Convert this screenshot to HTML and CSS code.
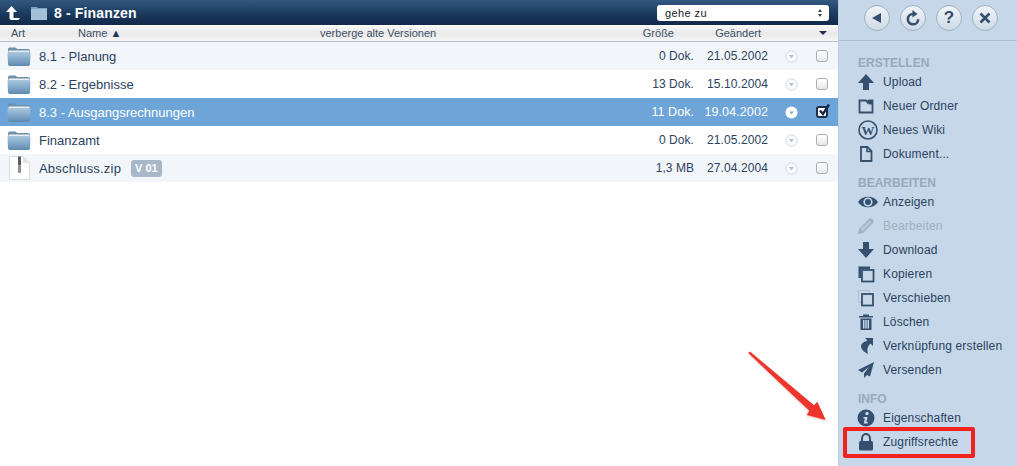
FILE: index.html
```html
<!DOCTYPE html>
<html lang="de">
<head>
<meta charset="utf-8">
<title>8 - Finanzen</title>
<link rel="stylesheet" href="styles.css">
</head>
<body>
<svg class="defs" width="0" height="0" aria-hidden="true">
  <defs>
    <linearGradient id="fg" x1="0" y1="0" x2="0" y2="1"><stop offset="0" stop-color="#a9c6de"/><stop offset=".55" stop-color="#7fa7c8"/><stop offset="1" stop-color="#5f89ad"/></linearGradient>
    <symbol id="folder" viewBox="0 0 24 22">
      <path d="M1 4.5 C1 3 2 2.500 3 2.500 H8 C9 2.500 9.500 3.500 10 4 H21 C22.500 4 23 5 23 6 V10 H1Z" fill="#6f8fa8"/>
      <path d="M1.500 5.500 H22.500 V8 H1.500Z" fill="#e8eef3"/>
      <path d="M.5 8.500 C.5 7.500 1 7 2 7 H22 C23 7 23.500 7.500 23.500 8.500 L23 19 C23 20.500 22 21 21 21 H3 C2 21 1 20.500 1 19Z" fill="url(#fg)"/>
    </symbol>
    <symbol id="menu" viewBox="0 0 14 14">
      <circle cx="7" cy="7" r="6" fill="#fbfcfd" stroke="#ccd3da"/>
      <path d="M4.200 5.500 H9.800 L7 9Z" fill="#b4bcc5"/>
    </symbol>
  </defs>
</svg>
<div class="page">
  <main class="content">
    <header class="titlebar">
      <svg class="up" viewBox="0 0 16 16" width="16" height="16"><path d="M6.500 1 L1 7 H4.500 V13 C4.500 14.500 5.500 15 7 15 H13.500 L15 13 H9 C8.500 13 8.500 12.800 8.500 12 V7 H12Z" fill="#fff"/></svg>
      <svg class="tfolder" viewBox="0 0 16 14" width="16" height="14"><path d="M0 1 H6 L7 2 H16 V14 H0Z" fill="#7fa3c2"/><path d="M0 3 H16 V14 H0Z" fill="#a4c0d8"/></svg>
      <h1 class="ttl">8 - Finanzen</h1>
      <div class="goto"><span>gehe zu</span><span class="spin"><i class="u"></i><i class="d"></i></span></div>
    </header>
    <div class="cols">
      <span class="c-art">Art</span>
      <span class="c-name">Name <b class="sort">▲</b></span>
      <span class="c-ver">verberge alte Versionen</span>
      <span class="c-size">Größe</span>
      <span class="c-date">Geändert</span>
      <span class="c-all"><i class="tri"></i></span>
    </div>
    <div class="rows">
      <div class="row odd"><svg class="ico"><use href="#folder"/></svg><span class="nm">8.1 - Planung</span><span class="sz">0 Dok.</span><span class="dt">21.05.2002</span><svg class="mn"><use href="#menu"/></svg><span class="cb"></span></div>
      <div class="row"><svg class="ico"><use href="#folder"/></svg><span class="nm">8.2 - Ergebnisse</span><span class="sz">13 Dok.</span><span class="dt">15.10.2004</span><svg class="mn"><use href="#menu"/></svg><span class="cb"></span></div>
      <div class="row sel"><svg class="ico"><use href="#folder"/></svg><span class="nm">8.3 - Ausgangsrechnungen</span><span class="sz">11 Dok.</span><span class="dt">19.04.2002</span><svg class="mn" viewBox="0 0 14 14"><circle cx="7" cy="7" r="6.500" fill="#fff"/><path d="M4.500 5.800 H9.500 L7 8.800Z" fill="#8aa6c0"/></svg><span class="cb on"><svg viewBox="0 0 14 14" width="14" height="14"><path d="M3 6.500 L6 10 L12 0.500" fill="none" stroke="#16284a" stroke-width="2.400"/></svg></span></div>
      <div class="row"><svg class="ico"><use href="#folder"/></svg><span class="nm">Finanzamt</span><span class="sz">0 Dok.</span><span class="dt">21.05.2002</span><svg class="mn"><use href="#menu"/></svg><span class="cb"></span></div>
      <div class="row odd"><svg class="ico zip" viewBox="0 0 24 26"><path d="M2.500 1.500 H16 L22.500 8 V24.500 H2.500Z" fill="#fff" stroke="#dcdcdc"/><path d="M16 1.500 V8 H22.500Z" fill="#e4e4e4"/><path d="M11 1.500 H14 V10 H11Z" fill="#5c5c5c"/><rect x="11" y="10" width="3" height="8" rx="1" fill="#8e8e8e"/></svg><span class="nm zn">Abschluss.zip</span><span class="badge">V 01</span><span class="sz">1,3 MB</span><span class="dt">27.04.2004</span><svg class="mn"><use href="#menu"/></svg><span class="cb"></span></div>
    </div>
  </main>
  <aside class="side">
    <div class="tools">
      <span class="rb"><svg viewBox="0 0 14 14" width="14" height="14"><path d="M11 2 V12 L2 7Z" fill="#34506e"/></svg></span>
      <span class="rb"><svg viewBox="0 0 14 14" width="16" height="16"><path d="M11.500 8 A4.500 4.500 0 1 1 7 3.500" fill="none" stroke="#34506e" stroke-width="2.200"/><path d="M6.500 0 L11 3.500 L6.500 6.500Z" fill="#34506e"/></svg></span>
      <span class="rb q">?</span>
      <span class="rb"><svg viewBox="0 0 14 14" width="14" height="14"><path d="M2.500 2.500 L11.500 11.500 M11.500 2.500 L2.500 11.500" stroke="#34506e" stroke-width="2.600"/></svg></span>
    </div>
    <nav class="menu">
      <h2>ERSTELLEN</h2>
      <a class="it"><svg viewBox="0 0 18 18"><path d="M9 1 L17 10 H12 V17 H6 V10 H1Z"/></svg>Upload</a>
      <a class="it"><svg viewBox="0 0 18 18"><path d="M2.500 3.500 H9 L11 6 L12 3.500 H15.500 V15.500 H2.500Z" fill="none" stroke="#34506e" stroke-width="1.800"/><path d="M10 3 H16 V7.500 H12.500Z"/></svg>Neuer Ordner</a>
      <a class="it"><svg class="wide" viewBox="0 0 20 20"><circle cx="10" cy="10" r="9" fill="none" stroke="#34506e" stroke-width="1.600"/><text x="10" y="14.500" text-anchor="middle" class="wp">W</text></svg>Neues Wiki</a>
      <a class="it"><svg viewBox="0 0 18 18"><path d="M4 2 H10.500 L14.500 6 V16 H4Z" fill="none" stroke="#34506e" stroke-width="1.800"/><path d="M10 2 V6.500 H14.500" fill="none" stroke="#34506e" stroke-width="1.500"/></svg>Dokument...</a>
      <h2 class="gap">BEARBEITEN</h2>
      <a class="it"><svg class="wide" viewBox="0 0 20 20"><path d="M0 10 C4 3 16 3 20 10 C16 17 4 17 0 10Z"/><circle cx="10" cy="10" r="4.600" fill="#c5d7e8"/><circle cx="10" cy="10" r="3"/></svg>Anzeigen</a>
      <a class="it off"><svg viewBox="0 0 18 18"><path d="M2 12 L12 2 C13 1 14 1 15 2 L16 3 C17 4 17 5 16 6 L6 16 L1 17Z" fill="#a2b1c1"/><path d="M3.500 12 L12.500 3.500 L14.500 5.500 L5.500 14.500Z" fill="#b5c6d7"/></svg>Bearbeiten</a>
      <a class="it"><svg viewBox="0 0 18 18"><path d="M6 1 H12 V8 H17 L9 17 L1 8 H6Z"/></svg>Download</a>
      <a class="it"><svg viewBox="0 0 18 18"><path d="M1.500 1.500 H13 V4 H4 V13 H1.500Z"/><rect x="5" y="5" width="11.500" height="11.500" fill="none" stroke="#34506e" stroke-width="1.800"/></svg>Kopieren</a>
      <a class="it"><svg viewBox="0 0 18 18"><rect x="1.500" y="1.500" width="11" height="12" fill="none" stroke="#8a9db0" stroke-width=".8" stroke-dasharray="1 1"/><rect x="5" y="5" width="11" height="11.500" fill="#c5d7e8" stroke="#34506e" stroke-width="1.800"/></svg>Verschieben</a>
      <a class="it"><svg viewBox="0 0 18 18"><path d="M6 3 V1.500 H12 V3 H16 V4.500 H2 V3Z"/><path d="M3.500 5.500 H14.500 V17 H3.500Z M6 7 V15.500 H7.500 V7Z M8.300 7 V15.500 H9.700 V7Z M10.500 7 V15.500 H12 V7Z" fill-rule="evenodd"/></svg>Löschen</a>
      <a class="it"><svg viewBox="0 0 18 18"><path d="M8 1 H16 V9 L13.500 6.500 C10 10 10 13 11 17 C7 15 4 12 4 9 C4 7 6 5 10.500 3.500Z"/></svg>Verknüpfung erstellen</a>
      <a class="it"><svg viewBox="0 0 18 18"><path d="M17 1 L1 9 L5 11.500 L12 6 L7 12.500 V17 L10 14 L13 15.500Z"/></svg>Versenden</a>
      <h2 class="gap2">INFO</h2>
      <a class="it"><svg viewBox="0 0 18 18"><circle cx="9" cy="9" r="8.500"/><circle cx="10" cy="4.500" r="1.700" fill="#c5d7e8"/><path d="M6.500 8 H10.500 L9.500 13 H11 L10.500 14.500 H6.800 L7.800 9.500 H6.300Z" fill="#c5d7e8"/></svg>Eigenschaften</a>
      <a class="it"><svg viewBox="0 0 18 18"><path d="M5 8 V5.500 C5 -.5 13 -.5 13 5.500 V8" fill="none" stroke="#34506e" stroke-width="2"/><rect x="2" y="8" width="14" height="9.500" rx="1.500"/></svg>Zugriffsrechte</a>
    </nav>
  </aside>
</div>
<svg class="arrow" viewBox="0 0 90 80" width="90" height="80" aria-hidden="true"><path d="M3.300 5 L5 3.500 L69 57.300 L72.300 53.700 L80.700 72 L61.700 67 L64.300 62.700 Z" fill="#ee342b"/></svg>
<div class="mark"></div>
</body>
</html>
```
FILE: styles.css
```css
* { box-sizing: border-box; }
html, body { margin: 0; height: 466px; overflow: hidden; background: #fff; }
body { font-family: "Liberation Sans", Arial, sans-serif; position: relative; color: #2c4260; -webkit-font-smoothing: antialiased; }
.defs { position: absolute; }
.page { display: flex; height: 466px; }
.content { width: 838px; flex: none; }
.side { width: 179px; flex: none; background: #c5d7e8; border-left: 1px solid #bcd0e2; }

.titlebar { height: 25px; display: flex; align-items: center; padding-left: 5px; background: linear-gradient(#33587f, #1b3a5e 55%, #12294a); }
.up { margin-right: 10px; }
.tfolder { margin-right: 7px; }
.ttl { margin: 0; font-size: 14px; font-weight: bold; color: #fff; letter-spacing: .15px; flex: 1; }
.goto { width: 172px; height: 16px; margin-right: 9px; background: #fff; border-radius: 3px; display: flex; align-items: center; justify-content: space-between; padding: 0 7px 0 8px; font-size: 11px; color: #222; letter-spacing: .4px; }
.spin { display: flex; flex-direction: column; gap: 2px; }
.spin i { display: block; width: 0; height: 0; border-left: 2px solid transparent; border-right: 2px solid transparent; }
.spin .u { border-bottom: 3px solid #444; }
.spin .d { border-top: 3px solid #444; }

.cols { height: 16px; margin-top: 1px; padding-bottom: 2px; display: flex; align-items: center; background: linear-gradient(#f8f8f8, #e9e9e9 50%, #f6f6f6); border-bottom: 1px solid #b9bec4; font-size: 11px; color: #3c4f68; }
.c-art { width: 78px; padding-left: 11px; }
.c-name { width: 178px; white-space: nowrap; }
.sort { font-size: 11px; font-weight: normal; color: #1d3557; }
.c-ver { width: 314px; padding-left: 64px; white-space: nowrap; }
.c-size { width: 104px; text-align: right; }
.c-date { width: 87px; text-align: right; }
.c-all { flex: 1; display: flex; justify-content: flex-end; padding-right: 11px; }
.tri { width: 0; height: 0; border-left: 4px solid transparent; border-right: 4px solid transparent; border-top: 4px solid #1b2f4c; }

.row { height: 28px; display: flex; align-items: center; font-size: 13px; color: #2c4260; }
.row.odd { background: #f2f5f9; }
.row.sel { background: #6ea5d9; color: #fff; }
.ico { width: 24px; height: 22px; margin-left: 7px; flex: none; }
.zip { height: 26px; }
.nm { margin-left: 8px; white-space: nowrap; }
.zn { letter-spacing: .2px; }
.badge { margin-left: 10px; background: #a9b8c8; color: #fff; font-size: 11px; font-weight: bold; padding: 1px 4px; border-radius: 3px; line-height: 15px; }
.sz { margin-left: auto; font-size: 12px; letter-spacing: .05px; white-space: nowrap; }
.dt { width: 74px; flex: none; text-align: right; font-size: 12px; letter-spacing: .1px; }
.row.sel .sz, .row.sel .dt { font-size: 12.500px; }
.mn { width: 13px; height: 13px; flex: none; margin-left: 17px; }
.cb { width: 12px; height: 12px; flex: none; margin: 0 10px 0 18px; border: 1px solid #a9aeb5; border-radius: 3px; background: linear-gradient(#fff, #e8e8e8); position: relative; }
.cb.on { background: #fff; border-color: #1b2f4c; border-width: 2px; }
.cb.on svg { position: absolute; left: -1px; top: -4px; }

.tools { height: 41px; display: flex; gap: 10px; padding: 5px 0 0 25px; border-bottom: 1px solid #aabdd0; }
.rb { width: 26px; height: 26px; border-radius: 50%; background: linear-gradient(#f0f4f8, #cfdbe6); border: 1px solid #9fb2c4; display: flex; align-items: center; justify-content: center; }
.q { font-size: 17px; font-weight: bold; color: #34506e; }
.menu { padding-top: 15px; }
.menu h2 { margin: 0 0 0 19px; height: 14px; font-size: 12px; line-height: 14px; font-weight: bold; color: #97a9bc; }
.menu h2.gap { margin-top: 10px; }
.menu h2.gap2 { margin-top: 10px; }
.it { display: flex; align-items: center; height: 24px; font-size: 12px; color: #2c4260; gap: 7px; padding-left: 17px; white-space: nowrap; letter-spacing: .15px; }
.it svg { width: 20px; height: 18px; flex: none; fill: #34506e; }
.it svg.wide { height: 20px; margin: 0 -2px 0 2px; }
.it.off { color: #9fafc0; }
.wp { font-family: "Liberation Serif", serif; font-size: 13px; font-weight: bold; }

.arrow { position: absolute; left: 745px; top: 348px; filter: drop-shadow(0 1px 1px rgba(120, 40, 40, .25)); }
.mark { position: absolute; left: 843px; top: 427px; width: 132px; height: 31px; border: 4px solid #f2231f; border-radius: 2px; }
```
